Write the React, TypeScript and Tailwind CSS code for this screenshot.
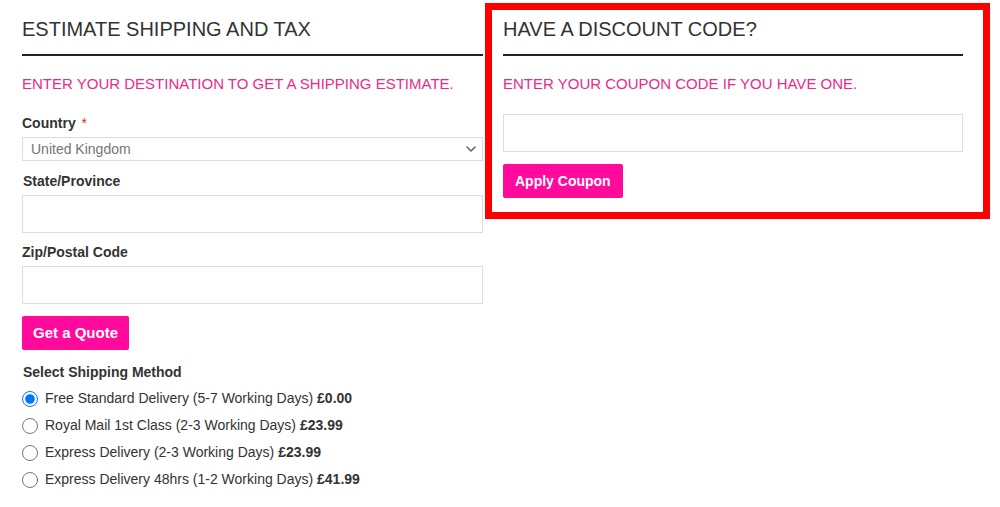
import React from "react";

const font = { fontFamily: '"Liberation Sans", Arial, sans-serif' };

function Heading({ children }: { children: React.ReactNode }) {
  return (
    <div className="mt-[8px] border-b-2 border-[#222] pb-[13px]">
      <h2 className="text-[20px] leading-[23px] text-[#333]">{children}</h2>
    </div>
  );
}

function Sub({ children }: { children: React.ReactNode }) {
  return <p className="mt-[19px] text-[15px] leading-[18px] text-[#ea2a8c]">{children}</p>;
}

const options = [
  ["Free Standard Delivery (5-7 Working Days)", "£0.00"],
  ["Royal Mail 1st Class (2-3 Working Days)", "£23.99"],
  ["Express Delivery (2-3 Working Days)", "£23.99"],
  ["Express Delivery 48hrs (1-2 Working Days)", "£41.99"],
];

export default function App() {
  return (
    <div className="min-h-[507px] bg-white" style={font}>
      <div className="flex items-start pt-[3px]">
        {/* left column */}
        <div className="ml-[22px] mt-[7px] w-[461px]">
          <Heading>ESTIMATE SHIPPING AND TAX</Heading>
          <Sub>ENTER YOUR DESTINATION TO GET A SHIPPING ESTIMATE.</Sub>

          <label className="mt-[22px] block text-[14px] font-bold leading-[16px] text-[#333]">
            Country <span className="ml-[2px] font-normal text-[#e02b27]">*</span>
          </label>
          <div className="relative mt-[6px] h-[24px] border border-[#ddd]">
            <div className="pl-[8px] text-[14px] leading-[22px] text-[#757575]">United Kingdom</div>
            <svg
              className="absolute right-[5px] top-[6px]"
              width="12"
              height="10"
              viewBox="0 0 12 10"
              fill="none"
            >
              <path d="M2 3l4 4 4-4" stroke="#666" strokeWidth="1.6" strokeLinecap="round" strokeLinejoin="round" />
            </svg>
          </div>

          <label className="mt-[12px] block pl-[1px] text-[14px] font-bold leading-[16px] text-[#333]">
            State/Province
          </label>
          <div className="mt-[6px] h-[38px] border border-[#ddd]" />

          <label className="mt-[11px] block text-[14px] font-bold leading-[16px] text-[#333]">
            Zip/Postal Code
          </label>
          <div className="mt-[6px] h-[38px] border border-[#ddd]" />

          <button className="mt-[12px] h-[34px] rounded-[2px] bg-[#ff0a9c] px-[11px] text-[15px] font-bold text-white">
            Get a Quote
          </button>

          <div className="mt-[14px] pl-[1px] text-[14px] font-bold leading-[16px] text-[#333]">
            Select Shipping Method
          </div>
          <div className="mt-[5px] flex flex-col">
            {options.map(([label, price], i) => (
              <label key={i} className="flex h-[27px] items-center text-[14px] text-[#333]">
                <input
                  type="radio"
                  name="ship"
                  defaultChecked={i === 0}
                  className="m-0 h-[16px] w-[16px]"
                />
                <span className="ml-[7px]">
                  {label} <span className="font-bold">{price}</span>
                </span>
              </label>
            ))}
          </div>
        </div>

        {/* right column */}
        <div className="ml-[2px] w-[505px] border-[7px] border-[#ff0000] pb-[14px] pl-[11px] pr-[20px]">
          <Heading>HAVE A DISCOUNT CODE?</Heading>
          <Sub>ENTER YOUR COUPON CODE IF YOU HAVE ONE.</Sub>
          <div className="mt-[21px] h-[38px] border border-[#ddd]" />
          <button className="mt-[12px] h-[34px] rounded-[2px] bg-[#ff0a9c] px-[12px] text-[14px] font-bold text-white">
            Apply Coupon
          </button>
        </div>
      </div>
    </div>
  );
}
